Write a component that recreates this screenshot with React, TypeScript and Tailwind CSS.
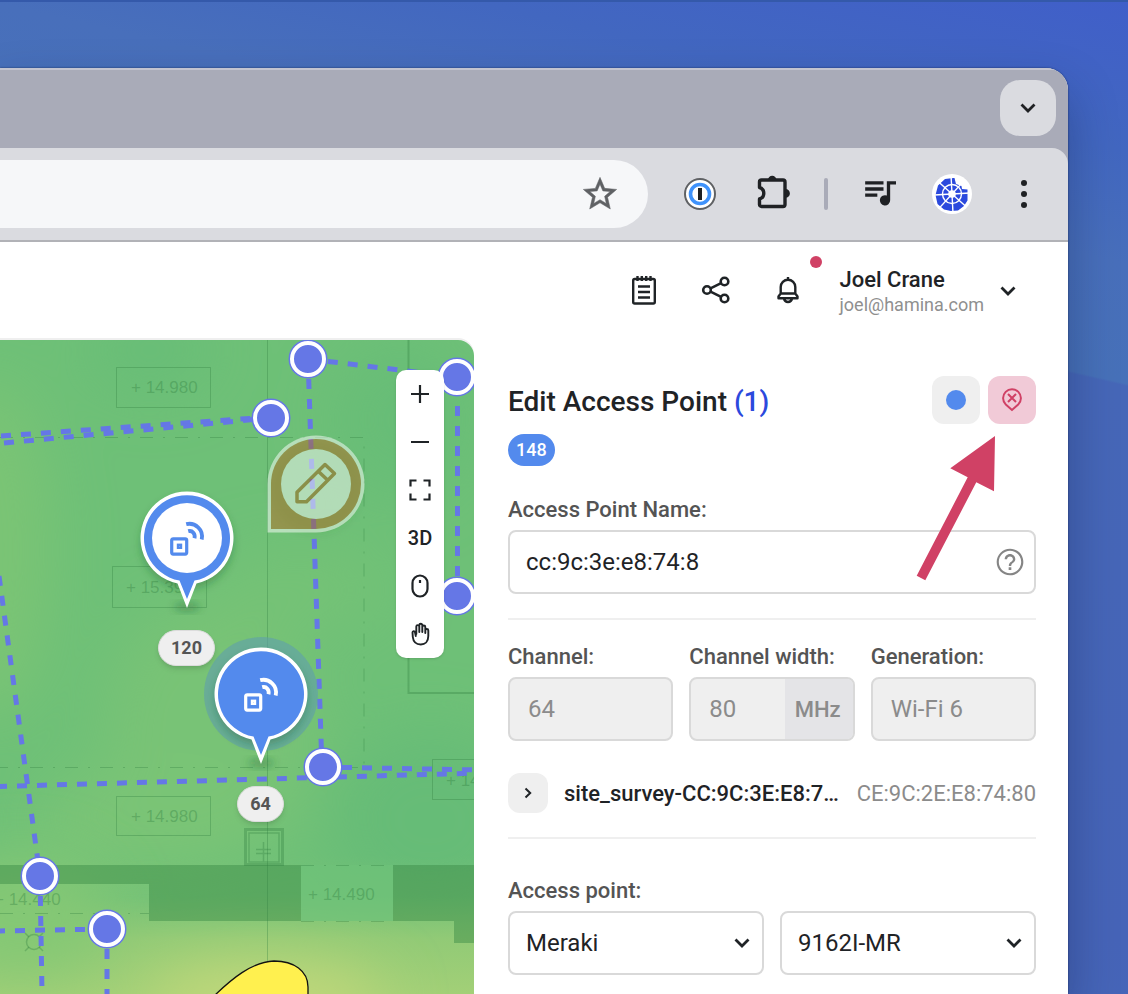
import type { ReactNode } from "react";

function Chevron({ className = "" }: { className?: string }) {
  return (
    <svg viewBox="0 0 24 24" className={`size-6 ${className}`} fill="none" stroke="currentColor" strokeWidth="2.800" aria-hidden="true">
      <path d="M5.500 8.500 12 15l6.500-6.500" />
    </svg>
  );
}

function AvatarLogo() {
  const spokes = [0, 45, 90, 135, 180, 225, 270, 315];
  return (
    <svg viewBox="-20 -20 40 40" className="size-10" aria-hidden="true">
      <circle r="20" fill="#fff" />
      <path d="M1.500-16-7-15-14-8.500-16.500 1-14.500 10-8 15.500-1 17 6 16.500 12 12 15.500 6.500 15.500-4.500 10-5 9.500-8 4-10 2.500-16Z" fill="#2b49dd" />
      <circle r="9.500" fill="none" stroke="#fff" strokeWidth="1.400" />
      {spokes.map((a) => (
        <path key={a} d="M0 0V-18" stroke="#fff" strokeWidth="1.400" transform={`rotate(${a - 3})`} />
      ))}
      <circle r="3.800" fill="#fff" />
    </svg>
  );
}

function BrowserChrome() {
  return (
    <div className="bg-[#a9abb8]">
      <div className="flex h-20 items-start justify-end border-t-2 border-[#c3c4d0] pt-[10px] pr-3">
        <button aria-label="Search tabs" className="flex size-14 items-center justify-center rounded-[20px] bg-[#dadbe0] text-[#1f2124]">
          <Chevron />
        </button>
      </div>
      <div className="flex h-[94px] items-center rounded-tr-2xl border-b-2 border-[#b1b2b7] bg-[#dadbe0] pr-6 text-[#1f2124]">
        <div className="flex h-[68px] flex-1 items-center justify-end rounded-r-full bg-[#f6f7f9] pr-7">
          <button aria-label="Bookmark this tab" className="text-[#5f6164]">
            <svg viewBox="0 0 24 24" className="size-10" fill="currentColor" stroke="currentColor" strokeWidth=".3">
              <path d="m22 9.240-7.190-.62L12 2 9.190 8.630 2 9.240l5.460 4.730L5.820 21 12 17.270 18.180 21l-1.630-7.030zM12 15.400l-3.760 2.270 1-4.280-3.320-2.880 4.380-.38L12 6.100l1.710 4.040 4.380.38-3.320 2.880 1 4.280z" />
            </svg>
          </button>
        </div>
        <button aria-label="Password manager" className="ml-9">
          <svg viewBox="0 0 32 32" className="size-8">
            <circle cx="16" cy="16" r="15" fill="#fff" stroke="#5f6164" strokeWidth="2" />
            <circle cx="16" cy="16" r="9.500" fill="#fff" stroke="#3f92fb" strokeWidth="3.600" />
            <rect x="14" y="10" width="4" height="12" fill="#1f2124" />
          </svg>
        </button>
        <button aria-label="Extensions" className="ml-[38px]">
          <svg viewBox="0 0 40 40" className="size-10">
            <path d="M7.500 6h21.500a2 2 0 0 1 2 2V30.500a2 2 0 0 1-2 2H7.500a2 2 0 0 1-2-2v-5.500a6 6 0 0 0 0-11.500V8a2 2 0 0 1 2-2Z" fill="none" stroke="currentColor" strokeWidth="3.400" strokeLinejoin="round" />
            <path d="M14 6a4.200 4.200 0 0 1 8.400 0ZM31.500 15a4.400 4.400 0 0 1 0 8.800Z" fill="currentColor" />
          </svg>
        </button>
        <span className="mr-8 ml-[30px] h-8 w-1 rounded-full bg-[#a9abb8]" />
        <button aria-label="Media controls" className="mr-8">
          <svg viewBox="0 0 24 24" className="size-10" fill="currentColor">
            <path d="M14.500 5.500H3.500v2h11zm0 3.700H3.500v2h11zM3.500 14.900h7.300v-2H3.500zM16.500 5.500v8.600a3.100 3.100 0 1 0 2 2.900V7.500H22v-2z" transform="translate(-.4 -1.200)" />
          </svg>
        </button>
        <button aria-label="Profile">
          <AvatarLogo />
        </button>
        <button aria-label="Browser menu" className="ml-8">
          <svg viewBox="0 0 40 40" className="size-10" fill="currentColor">
            <circle cx="20" cy="9" r="3" />
            <circle cx="20" cy="20" r="3" />
            <circle cx="20" cy="31" r="3" />
          </svg>
        </button>
      </div>
    </div>
  );
}

function HeaderButton({ label, children }: { label: string; children: ReactNode }) {
  return (
    <button aria-label={label} className="relative flex size-10 items-start justify-center pt-[3px]">
      {children}
    </button>
  );
}

function AppHeader() {
  return (
    <header className="flex h-[98px] items-center justify-end gap-8 bg-white pr-12 text-[#1f2326]">
      <HeaderButton label="Notes">
        <svg viewBox="0 0 32 32" className="size-8" fill="none" stroke="currentColor" strokeWidth="2.400">
          <rect x="5.200" y="5" width="21.600" height="24.500" rx="1.500" />
          <path d="M9.500 2v5M13.800 2v5M18.200 2v5M22.500 2v5M10 12.500h12M10 18h12M10 23.500h12" />
        </svg>
      </HeaderButton>
      <HeaderButton label="Share">
        <svg viewBox="0 0 32 32" className="size-8" fill="none" stroke="currentColor" strokeWidth="2.600">
          <circle cx="7" cy="16" r="3.800" />
          <circle cx="24.500" cy="7.500" r="3.800" />
          <circle cx="24.500" cy="24.500" r="3.800" />
          <path d="m10.500 14.300 10.600-5.100M10.500 17.700l10.600 5.100" />
        </svg>
      </HeaderButton>
      <HeaderButton label="Notifications">
        <svg viewBox="0 0 32 32" className="size-8" fill="none" stroke="currentColor" strokeWidth="2.400" strokeLinejoin="round">
          <path d="M16 3v3M8.700 19.500V13a7.300 7.300 0 0 1 14.600 0v6.500M8.700 19.500h14.600l2.200 3v1.700h-19v-1.700zM12 24.500c.8 4.600 7.200 4.600 8 0" />
        </svg>
        <span className="absolute -top-[15px] -right-[14px] size-3 rounded-full bg-[#d04165]" />
      </HeaderButton>
      <button className="flex items-center gap-3 text-left">
        <span className="flex flex-col">
          <span className="text-[22px] leading-7 font-medium">Joel Crane</span>
          <span className="text-lg leading-[22px] text-[#8f8f8f]">joel@hamina.com</span>
        </span>
        <Chevron />
      </button>
    </header>
  );
}

const NODES = [
  [308, 19], [271, 78], [457, 37], [457, 256], [323, 427], [40, 536], [107, 589],
];

const ROUTES = [
  "M308 19 322 427", "M308 19 457 37", "M457.500 256V37", "M322 427 480 430", "M-3 446.500 480 433",
  "M1 96 270 77", "M4 103 270 78", "M-1 236 40 536", "M40 536 44.500 800", "M-5 591 107 589", "M107 589V900",
];

function FloorPlan() {
  return (
    <svg width="100%" height="100%" className="absolute inset-0" role="img" aria-label="Floor plan with signal heat map">
      <defs>
        <filter id="soft" x="-80%" y="-80%" width="260%" height="260%">
          <feGaussianBlur stdDeviation="30" />
        </filter>
        <filter id="shadow" x="-50%" y="-50%" width="200%" height="200%">
          <feGaussianBlur stdDeviation="4" />
        </filter>
        <linearGradient id="fade" x1="0" y1="0" x2="0" y2="1">
          <stop offset="0" stopColor="#9fcf77" stopOpacity="0" />
          <stop offset=".3" stopColor="#98cc76" stopOpacity=".15" />
          <stop offset=".6" stopColor="#98cc76" stopOpacity=".85" />
          <stop offset="1" stopColor="#a3d077" />
        </linearGradient>
      </defs>
      <rect width="100%" height="100%" fill="#6ec077" />
      <g filter="url(#soft)">
        <ellipse cx="-10" cy="210" rx="60" ry="170" fill="#7ac475" />
        <ellipse cx="210" cy="390" rx="110" ry="130" fill="#78c376" />
        <ellipse cx="300" cy="250" rx="90" ry="40" fill="#74c276" />
        <ellipse cx="150" cy="480" rx="120" ry="50" fill="#7ac476" />
        <ellipse cx="430" cy="480" rx="100" ry="90" fill="#66bc77" />
        <ellipse cx="400" cy="80" rx="70" ry="80" fill="#67bd77" />
        <ellipse cx="150" cy="10" rx="60" ry="40" fill="#68bd77" />
      </g>
      <rect y="515" width="100%" height="140" fill="url(#fade)" />
      <g filter="url(#soft)">
        <ellipse cx="265" cy="660" rx="120" ry="38" fill="#c2d87a" />
        <ellipse cx="20" cy="575" rx="90" ry="60" fill="#84c875" />
      </g>
      <path d="M0 525h301v56H149v-37H0zM393 525h81v78h-20v-22h-61z" fill="#3c8b48" fillOpacity=".48" />
      <path d="M301 525h92v56h-92z" fill="#6ec279" fillOpacity=".7" />
      <g stroke="#2f7d3e" strokeOpacity=".32" fill="none">
        <path d="M116.500 27.500h94v40h-94zM112.500 226.500h94v41h-94zM116.500 456.500h94v39h-94zM500 419.500h-67.500v40H500" />
        <path d="M267.500 0v700" />
        <path d="M0 97.500h364v330H0M0 573.500h149M301 525.500h92M301 581.500h92" strokeDasharray="13 10 2 10" />
        <path d="M408.500 0v353H480" strokeWidth="2" />
        <path d="M245.500 489.500h37v35h-37z" strokeWidth="3" />
        <path d="M249 493h30v29h-30zM256 509.500h15M256 513.500h15M263.500 502v20" strokeWidth="1.500" />
        <circle cx="34" cy="602" r="7.500" strokeWidth="1.500" />
        <path d="m25 593 4 4m10 10 4 4m0-18-4 4m-10 10-4 4" strokeWidth="1.500" />
      </g>
      <g fill="#2f7d3e" fillOpacity=".36" fontSize="17" fontFamily="Liberation Sans, Arial, sans-serif">
        <text x="131" y="53">+ 14.980</text>
        <text x="126" y="253">+ 15.390</text>
        <text x="131" y="482">+ 14.980</text>
        <text x="308" y="560">+ 14.490</text>
        <text x="-6" y="565">+ 14.440</text>
        <text x="446" y="446">+ 14.980</text>
      </g>
      <path d="M210 660c22-22 42-38 64-39 20 0 34 10 34 26v13Z" fill="#fff04f" stroke="#111" strokeWidth="1.300" />
      <g stroke="#6577e6" strokeWidth="5" strokeDasharray="10 10" fill="none">
        {ROUTES.map((d) => (
          <path key={d} d={d} />
        ))}
      </g>
      {NODES.map(([x, y]) => (
        <g key={`${x}-${y}`}>
          <circle cx={x} cy={y} r="19.500" fill="#6577e6" />
          <circle cx={x} cy={y} r="16" fill="#6577e6" stroke="#fff" strokeWidth="4" />
        </g>
      ))}
      <circle cx="316" cy="148" r="46" fill="#1f5a2c" fillOpacity=".08" filter="url(#shadow)" />
      <g opacity=".5" transform="translate(316 144)">
        <path d="M-48.500 48.500V0A48.500 48.500 0 1 1 0 48.500Z" fill="#fff" />
        <path d="M-45 45V0A45 45 0 1 1 0 45Z" fill="#b86c28" />
        <circle r="35" fill="#fff" />
        <path d="M-19 17.700v-9.500L9-19.500l9.500 9L-9.500 17.700ZM2.500-12.500 11.500-4" fill="none" stroke="#b06825" strokeWidth="3.500" strokeLinejoin="round" />
      </g>
    </svg>
  );
}

function AccessPointPin({ channel, selected = false, className }: { channel: string; selected?: boolean; className: string }) {
  return (
    <button className={`absolute flex w-[115px] flex-col items-center ${className}`}>
      <svg viewBox="-58 -58 116 136" className="h-[136px] w-[116px] shrink-0 overflow-visible" aria-hidden="true">
        {selected && <circle r="57" fill="#5f9fae" fillOpacity=".6" />}
        <ellipse cy="69" rx="13" ry="4" fill="#1f5a2c" fillOpacity=".4" filter="url(#shadow)" />
        <circle r="46" cy="5" fill="#1f5a2c" fillOpacity=".35" filter="url(#shadow)" />
        <path d="M-9.500 45.500 0 70 9.500 45.500A46.500 46.500 0 1 0-9.500 45.500Z" fill="#fff" />
        <path d="M-7.500 42.500 0 61 7.500 42.500A43 43 0 1 0-7.500 42.500Z" fill="#538aed" />
        {!selected && <circle r="35" fill="#fff" />}
        <g stroke={selected ? "#fff" : "#538aed"} fill="none">
          <rect x="-15.300" y=".8" width="15" height="15.300" rx="1.500" strokeWidth="3.200" />
          <rect x="-9" y="6.800" width="3" height="3" strokeWidth="2.400" />
          <path d="M-.8-13.800C8-16 17-8.500 14.700 1.500M1.200-6.800C5.500-8 8.500-4 7.500.2" strokeWidth="3.800" />
        </g>
      </svg>
      <span className="mt-[14px] rounded-full border border-[#dcdcdc] bg-[#efefef] px-3 text-lg leading-[34px] font-bold text-[#555] shadow-md">
        {channel}
      </span>
    </button>
  );
}

function MapToolbar() {
  const tool = "flex size-12 items-center justify-center";
  const icon = { viewBox: "0 0 24 24", fill: "none", stroke: "currentColor", strokeWidth: 2.2 };
  return (
    <div className="absolute top-[30px] right-[30px] flex flex-col rounded-[10px] bg-white text-[#1f2326] shadow-sm">
      <button aria-label="Zoom in" className={tool}>
        <svg {...icon} className="size-6"><path d="M12 3v18M3 12h18" /></svg>
      </button>
      <button aria-label="Zoom out" className={tool}>
        <svg {...icon} className="size-6"><path d="M3 12h18" /></svg>
      </button>
      <button aria-label="Fit to screen" className={tool}>
        <svg {...icon} className="size-6"><path d="M2.500 8.500v-6h6M15.500 2.500h6v6M21.500 15.500v6h-6M8.500 21.500h-6v-6" /></svg>
      </button>
      <button className={`${tool} text-xl font-medium`}>3D</button>
      <button aria-label="Mouse mode" className={tool}>
        <svg {...icon} className="size-6"><rect x="4.500" y="1.500" width="15" height="21" rx="7.500" /><path d="M12 6v3" /></svg>
      </button>
      <button aria-label="Pan" className={tool}>
        <svg {...icon} strokeWidth={1.9} strokeLinecap="round" strokeLinejoin="round" className="size-6">
          <path d="M8.300 12V4.600a1.500 1.500 0 0 1 3 0V10M11.300 10V3.200a1.500 1.500 0 0 1 3 0V10M14.300 5a1.500 1.500 0 0 1 3 0v6M17.300 8.500a1.500 1.500 0 0 1 3 0v5.500c0 5.500-3.300 8.500-7.500 8.500-4.800 0-7.500-3-8-7.500l-.3-4.500c0-1.700 2.200-1.900 2.500-.2l.8 3.700" />
        </svg>
      </button>
    </div>
  );
}

function Field({ label, id, children }: { label: string; id: string; children: ReactNode }) {
  return (
    <div className="flex min-w-0 flex-col gap-2">
      <label htmlFor={id} className="text-[22px] leading-6 font-medium whitespace-nowrap text-[#545454]">{label}</label>
      {children}
    </div>
  );
}

function Select({ id, value, label }: { id: string; value: string; label: string }) {
  return (
    <div className="relative min-w-0 flex-1">
      <select id={id} aria-label={label} className="h-16 w-full appearance-none rounded-lg border-2 border-[#d9d9d9] bg-white px-4 text-2xl text-[#1f2326]">
        <option>{value}</option>
      </select>
      <Chevron className="pointer-events-none absolute top-5 right-[10px]" />
    </div>
  );
}

const disabledInput = "h-16 w-full min-w-0 rounded-lg border-2 border-[#d9d9d9] bg-[#efefef] px-[18px] text-2xl text-[#8b8b8b]";

function EditPanel() {
  return (
    <aside className="relative flex w-[594px] shrink-0 flex-col bg-white pt-9 pr-8 pl-[34px] text-[#1f2326]">
      <div className="flex items-center gap-2">
        <h1 className="flex-1 pt-1 text-[28px] leading-9 font-medium">
          Edit Access Point <span className="text-[#2b49dd]">(1)</span>
        </h1>
        <button aria-label="Marker colour" className="flex size-12 items-center justify-center rounded-xl bg-[#efefef]">
          <span className="size-5 rounded-full bg-[#538aed]" />
        </button>
        <button aria-label="Remove placement" className="flex size-12 items-center justify-center rounded-xl bg-[#f1cad7]">
          <svg viewBox="0 0 24 24" className="size-6" fill="none" stroke="#d04165" strokeWidth="2">
            <path d="M12 22 5.800 16.500A8.900 8.900 0 1 1 18.200 16.500ZM8 6l8 8M16 6l-8 8" />
          </svg>
        </button>
      </div>
      <span className="mt-[10px] self-start rounded-full bg-[#538aed] px-2 text-lg leading-8 font-medium text-white">148</span>
      <div className="mt-8">
        <Field label="Access Point Name:" id="ap-name">
          <div className="relative">
            <input id="ap-name" defaultValue="cc:9c:3e:e8:74:8" className="h-16 w-full rounded-lg border-2 border-[#d9d9d9] pr-16 pl-4 text-2xl" />
            <button aria-label="Help" className="absolute top-4 right-[10px] text-[#858585]">
              <svg viewBox="0 0 24 24" className="size-8" fill="currentColor">
                <path d="M11 18h2v-2h-2zm1-16C6.480 2 2 6.480 2 12s4.480 10 10 10 10-4.480 10-10S17.520 2 12 2m0 18.400c-4.630 0-8.400-3.770-8.400-8.400S7.370 3.600 12 3.600s8.400 3.770 8.400 8.400-3.770 8.400-8.400 8.400M12 6c-2.210 0-4 1.790-4 4h1.800c0-1.200.98-2.200 2.200-2.200s2.200 1 2.200 2.200c0 2-3.100 1.750-3.100 5h1.800c0-2.250 3.100-2.500 3.100-5 0-2.210-1.790-4-4-4" />
              </svg>
            </button>
          </div>
        </Field>
      </div>
      <hr className="mt-6 border-t-2 border-[#efefef]" />
      <div className="mt-[25px] grid grid-cols-3 gap-4">
        <Field label="Channel:" id="channel">
          <input id="channel" disabled defaultValue="64" className={disabledInput} />
        </Field>
        <Field label="Channel width:" id="width">
          <div className="flex h-16 items-stretch overflow-hidden rounded-lg border-2 border-[#d9d9d9] bg-[#efefef] text-[#8b8b8b]">
            <input id="width" disabled defaultValue="80" className="w-0 min-w-0 flex-1 pl-[18px] text-2xl" />
            <span className="flex items-center bg-[#e4e4e7] pr-3 pl-[10px] text-[22px] font-medium">MHz</span>
          </div>
        </Field>
        <Field label="Generation:" id="generation">
          <input id="generation" disabled defaultValue="Wi-Fi 6" className={disabledInput} />
        </Field>
      </div>
      <div className="mt-8 flex items-center">
        <button aria-label="Expand network" className="flex size-10 shrink-0 items-center justify-center rounded-xl bg-[#efefef]">
          <svg viewBox="0 0 16 16" className="size-4" fill="none" stroke="currentColor" strokeWidth="2"><path d="m5.500 3.500 4.700 4.500-4.700 4.500" /></svg>
        </button>
        <span className="ml-4 min-w-0 flex-1 truncate text-[22px] font-medium">site_survey-CC:9C:3E:E8:74:80</span>
        <span className="ml-4 text-[22px] text-[#8b8b8b]">CE:9C:2E:E8:74:80</span>
      </div>
      <hr className="mt-6 border-t-2 border-[#efefef]" />
      <div className="mt-10">
        <Field label="Access point:" id="vendor">
          <div className="flex gap-4">
            <Select id="vendor" label="Access point:" value="Meraki" />
            <Select id="model" label="Model" value="9162I-MR" />
          </div>
        </Field>
      </div>
      <svg viewBox="0 0 80 146" className="pointer-events-none absolute top-24 right-[72px] h-[146px] w-20" aria-hidden="true">
        <path d="M79 0 34.300 32.300 51.700 41.300.7 139.700 9.300 144.300 60.300 46.300 78 55.300Z" fill="#d04165" />
      </svg>
    </aside>
  );
}

export default function App() {
  return (
    <div className="flex min-h-screen flex-col overflow-hidden border-t-2 border-[#3459aa] bg-[#4565b7] bg-[linear-gradient(193deg,#405fc9_0%,#4267c0_12%,#486fbb_21%,#4771b9_30.500%,#4667b8_30.700%,#4664b8_75%,#466aba_100%)] pt-[66px] pr-[60px] font-[Roboto,sans-serif]">
      <div className="flex flex-1 flex-col overflow-hidden rounded-tr-[22px] bg-white shadow-[0_24px_48px_rgba(15,30,70,0.35),0_0_2px_rgba(15,30,70,0.8)]">
        <BrowserChrome />
        <AppHeader />
        <div className="flex flex-1">
          <main className="relative min-w-0 flex-1 overflow-hidden rounded-tr-2xl shadow-[0_-2px_0_#efefef]">
            <FloorPlan />
            <AccessPointPin channel="120" className="top-[140px] left-[129px]" />
            <AccessPointPin channel="64" selected className="top-[296px] left-[203px]" />
            <MapToolbar />
          </main>
          <EditPanel />
        </div>
      </div>
    </div>
  );
}
